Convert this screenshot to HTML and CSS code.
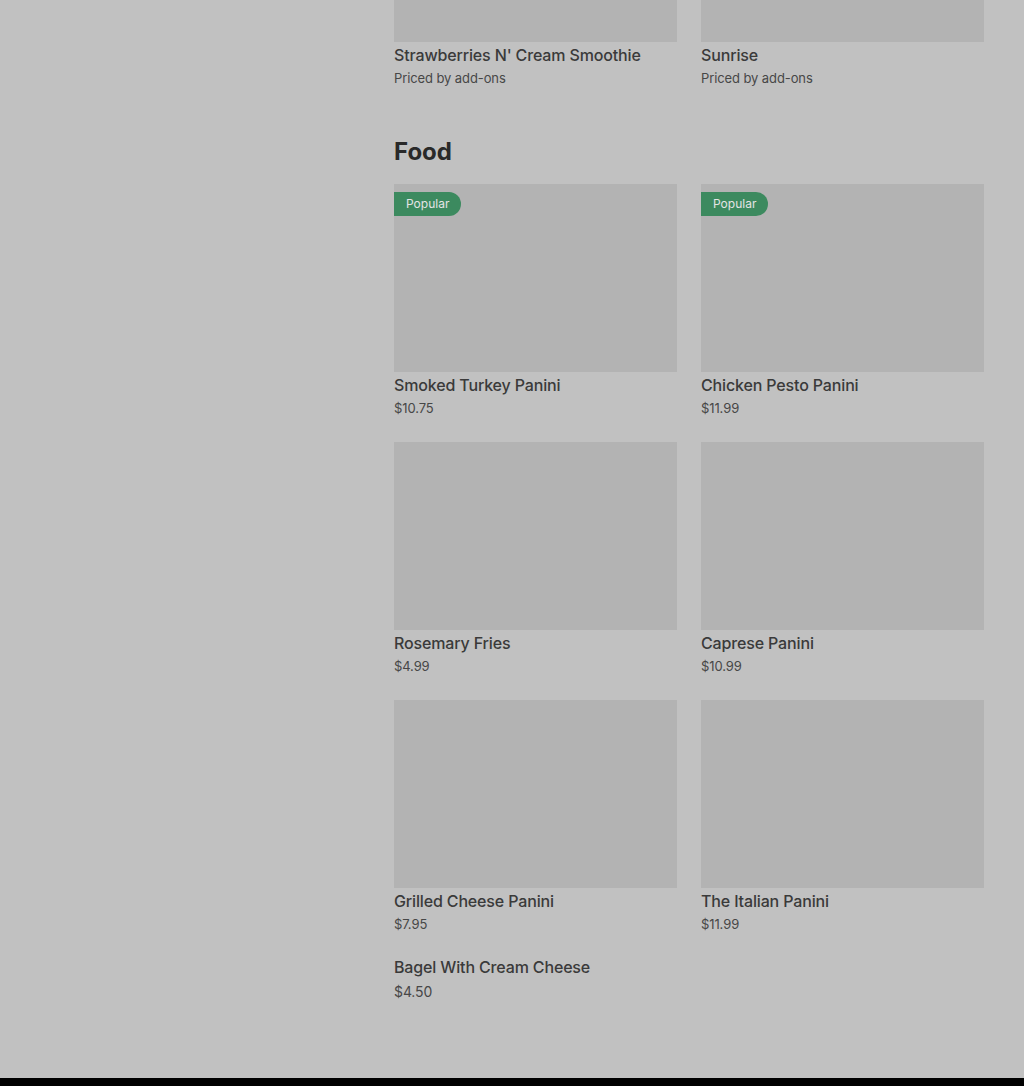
FILE: index.html
```html
<!DOCTYPE html>
<html lang="en">
<head>
    <meta charset="UTF-8">
    <meta name="viewport" content="width=device-width, initial-scale=1.0">
    <title>Menu</title>
    <link rel="stylesheet" href="styles.css">
</head>
<body>
    <div class="page">
        <div class="menu">
            <div class="section">
                <div class="grid">
                    <div class="item">
                        <div class="thumb partial"></div>
                        <div class="name">Strawberries N' Cream Smoothie</div>
                        <div class="price">Priced by add-ons</div>
                    </div>
                    <div class="item">
                        <div class="thumb partial"></div>
                        <div class="name">Sunrise</div>
                        <div class="price">Priced by add-ons</div>
                    </div>
                </div>
            </div>

            <div class="section">
                <h2 class="section-title">Food</h2>
                <div class="grid">
                    <div class="item">
                        <div class="thumb"><span class="badge">Popular</span></div>
                        <div class="name">Smoked Turkey Panini</div>
                        <div class="price">$10.75</div>
                    </div>
                    <div class="item">
                        <div class="thumb"><span class="badge">Popular</span></div>
                        <div class="name">Chicken Pesto Panini</div>
                        <div class="price">$11.99</div>
                    </div>
                    <div class="item">
                        <div class="thumb"></div>
                        <div class="name">Rosemary Fries</div>
                        <div class="price">$4.99</div>
                    </div>
                    <div class="item">
                        <div class="thumb"></div>
                        <div class="name">Caprese Panini</div>
                        <div class="price">$10.99</div>
                    </div>
                    <div class="item">
                        <div class="thumb"></div>
                        <div class="name">Grilled Cheese Panini</div>
                        <div class="price">$7.95</div>
                    </div>
                    <div class="item">
                        <div class="thumb"></div>
                        <div class="name">The Italian Panini</div>
                        <div class="price">$11.99</div>
                    </div>
                    <div class="item no-thumb">
                        <div class="name">Bagel With Cream Cheese</div>
                        <div class="price">$4.50</div>
                    </div>
                </div>
            </div>
        </div>
        <div class="footer"></div>
    </div>
</body>
</html>
```

FILE: styles.css
```css
body {
    margin: 0;
    background-color: #c1c1c1;
    font-family: Inter, "Noto Sans", sans-serif;
    color: #3a3a3a;
}

.page {
    min-height: 1086px;
    display: flex;
    flex-direction: column;
}

.menu {
    flex: 1;
    padding-left: 394px;
    width: 590px;
}

.section {
    margin-bottom: 48px;
}

.section:last-child {
    margin-bottom: 0;
}

.section-title {
    margin: 0 0 16px;
    font-size: 24px;
    line-height: 32px;
    font-weight: 700;
    color: #292929;
}

.grid {
    display: grid;
    grid-template-columns: 283px 283px;
    column-gap: 24px;
    row-gap: 24px;
}

.item {
    padding-bottom: 2px;
}

.thumb {
    position: relative;
    height: 188px;
    background-color: #b3b3b3;
    margin-bottom: 3px;
}

.thumb.partial {
    height: 42px;
}

.badge {
    position: absolute;
    top: 8px;
    left: 0;
    height: 24px;
    line-height: 24px;
    padding: 0 12px;
    font-size: 12px;
    color: #e4e4e4;
    background-color: #3c8a5f;
    border-radius: 0 12px 12px 0;
}

.name {
    font-size: 16px;
    line-height: 20px;
    font-weight: 500;
    letter-spacing: -0.15px;
    color: #3a3a3a;
}

.price {
    margin-top: 5px;
    font-size: 13px;
    line-height: 16px;
    letter-spacing: -0.1px;
    color: #474747;
}

.no-thumb .name {
    margin-top: -1px;
}

.no-thumb .price {
    margin-top: 7px;
    font-size: 14px;
}

.footer {
    height: 8px;
    background-color: #000;
}
```
